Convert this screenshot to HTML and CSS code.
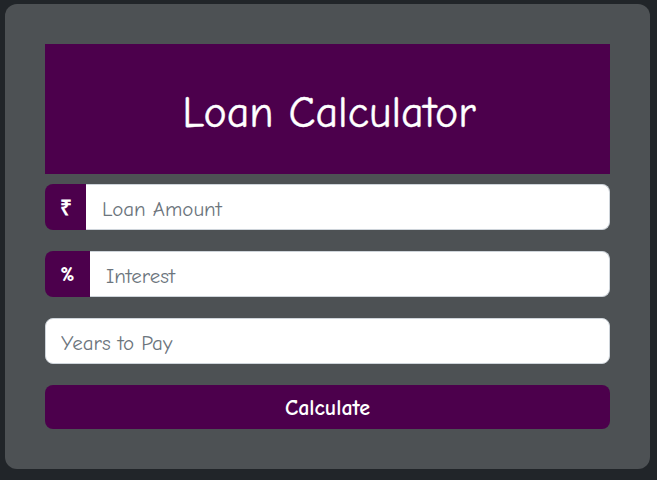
FILE: index.html
```html
<!DOCTYPE html>
<html>
<head>
<meta charset="utf-8">
<link rel="stylesheet" href="styles.css">
</head>
<body>
<div class="card">
  <div class="header"><h1>Loan Calculator</h1></div>
  <div class="group">
    <span class="addon rupee">₹</span>
    <input class="field" type="text" placeholder="Loan Amount">
  </div>
  <div class="group">
    <span class="addon pct">%</span>
    <input class="field" type="text" placeholder="Interest">
  </div>
  <div class="group">
    <input class="field solo" type="text" placeholder="Years to Pay">
  </div>
  <button class="btn">Calculate</button>
</div>
</body>
</html>
```
FILE: styles.css
```css
html, body { margin: 0; padding: 0; }
body {
  background: #212529;
  width: 657px;
  height: 480px;
  padding: 4px 0 0 5px;
  box-sizing: border-box;
  font-family: "Comic Sans MS", "Comic Neue", "Open Sans", sans-serif;
}
.card {
  width: 645px;
  height: 465px;
  box-sizing: border-box;
  background: #4d5154;
  border-radius: 12px;
  padding: 40px;
  display: flex;
  flex-direction: column;
}
.header {
  background: #4c004c;
  height: 130px;
  display: flex;
  align-items: center;
  justify-content: center;
  margin-bottom: 10px;
}
.header h1 {
  margin: 0;
  color: #fff;
  font-weight: 400;
  font-size: 44px;
  padding: 6px 0 0 3px;
  -webkit-text-stroke: 0.4px #fff;
}
.group {
  display: flex;
  height: 46px;
  margin-bottom: 21px;
}
.addon {
  background: #4c004c;
  color: #fff;
  border-radius: 8px 0 0 8px;
  display: flex;
  align-items: center;
  justify-content: center;
  font-size: 21px;
  font-weight: 700;
}
.rupee { width: 41px; }
.pct { width: 45px; }
.field {
  flex: 1;
  border: 1px solid #ced4da;
  border-left: none;
  border-radius: 0 8px 8px 0;
  background: #fff;
  font-family: inherit;
  font-size: 21px;
  padding: 3px 16px 0;
  outline: none;
  margin: 0;
}
.field.solo {
  border-left: 1px solid #ced4da;
  border-radius: 8px;
  padding: 3px 15px 0;
}
.field::placeholder { color: #6c757d; }
.btn {
  height: 44px;
  border: none;
  border-radius: 8px;
  background: #4c004c;
  color: #fff;
  font-family: inherit;
  font-size: 22px;
  font-weight: 700;
  padding: 2px 0 0;
}
```
